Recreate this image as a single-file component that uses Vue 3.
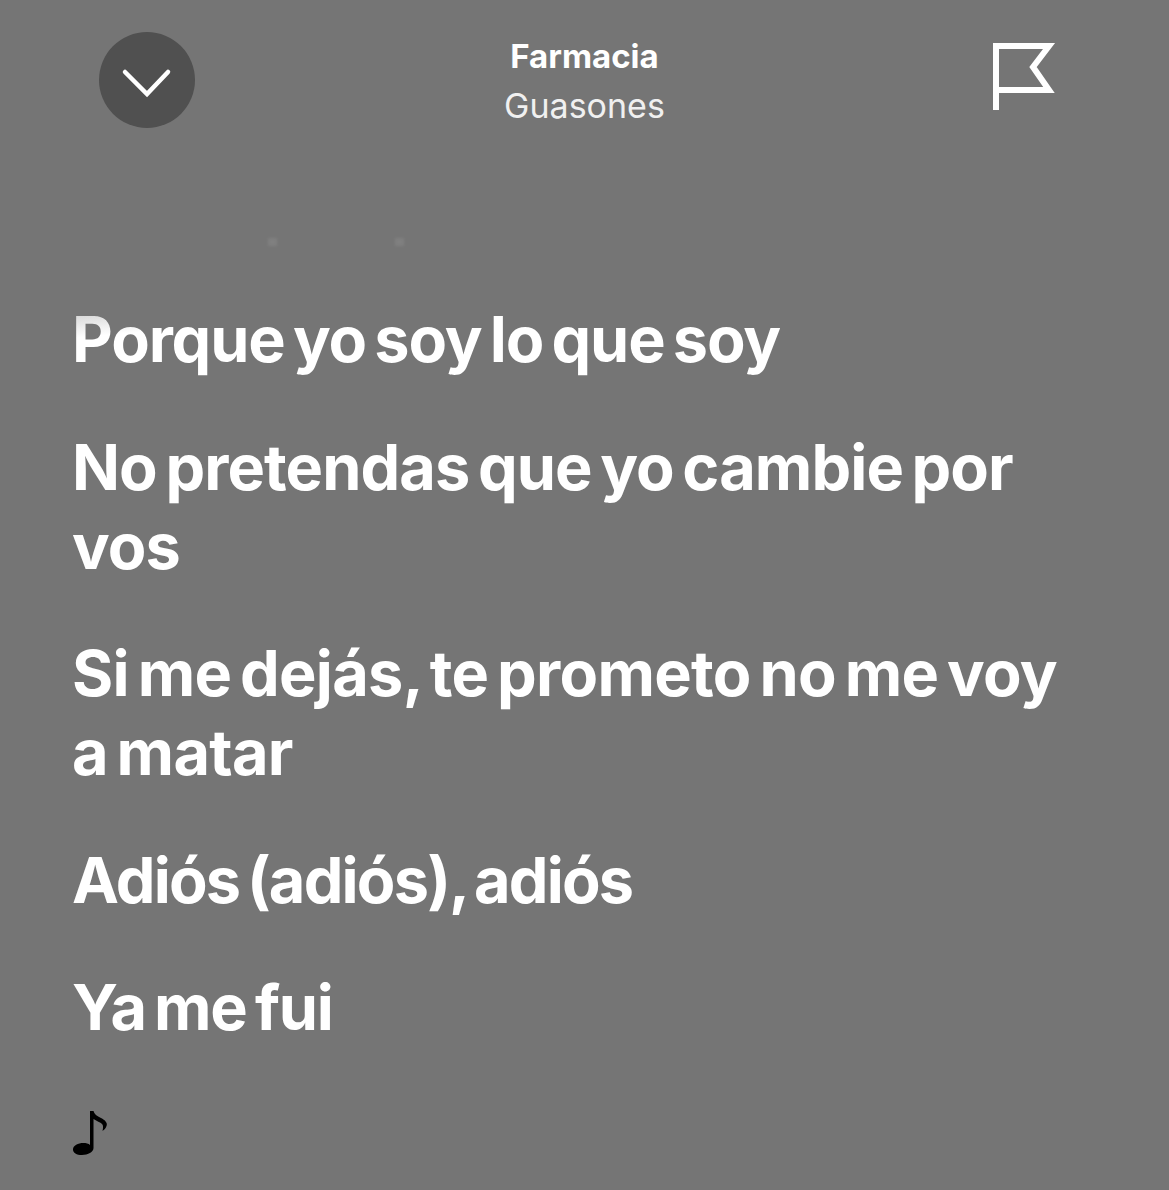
<template>
  <div class="screen">
    <header class="topbar">
      <button class="topbar__close">
        <svg width="96" height="96" viewBox="0 0 96 96">
          <path d="M26 40 L48 62 L69 40" fill="none" stroke="#fff" stroke-width="4.5" stroke-linecap="round" stroke-linejoin="miter" />
        </svg>
      </button>
      <div class="topbar__track">
        <div class="topbar__title">{{ title }}</div>
        <div class="topbar__artist">{{ artist }}</div>
      </div>
      <svg class="topbar__flag" width="64" height="68" viewBox="0 0 64 68">
        <path d="M4 67 V3 H57 L41 24 L57 47 H4" fill="none" stroke="#fff" stroke-width="6" />
      </svg>
    </header>

    <div class="fadedLine">
      <span class="fadedLine__dot"></span>
      <span class="fadedLine__dot"></span>
    </div>

    <main class="lyrics">
      <p
        v-for="(line, i) in lines"
        :key="line.text"
        class="lyrics__line"
        :class="{ 'lyrics__line--first': i === 0 }"
        :style="{ letterSpacing: line.tracking + 'px' }"
      >{{ line.text }}</p>
      <svg class="lyrics__note" width="38" height="48" viewBox="0 0 38 48">
        <path d="M17 1 H20.5 C21 4 24 6 28 8 C32 10 35 13 33.5 16 C33 18 31 20 29.500 21 C30.500 17 30.500 14 27 12.500 C25 11.500 22 10 20.500 9 V38 C20.500 42 15 45 9 45 C3.500 45 0 43 0 39.500 C0 35.500 5 33 10.500 33 C13 33 15.500 33.500 17 35 Z" fill="#000" />
      </svg>
    </main>
  </div>
</template>

<script setup>
const title = 'Farmacia'
const artist = 'Guasones'

const lines = [
  { text: 'Porque yo soy lo que soy', tracking: -1.15 },
  { text: 'No pretendas que yo cambie por vos', tracking: -0.9 },
  { text: 'Si me dejás, te prometo no me voy a matar', tracking: -0.7 },
  { text: 'Adiós (adiós), adiós', tracking: -1.8 },
  { text: 'Ya me fui', tracking: -1.2 }
]
</script>

<style>
html, body {
  margin: 0;
  background: #757575;
}
</style>

<style scoped>
.screen {
  width: 1169px;
  height: 1190px;
  overflow: hidden;
  background: #757575;
  font-family: Inter, "Liberation Sans", sans-serif;
  color: #fff;
  position: relative;
}

.topbar {
  display: grid;
  grid-template-columns: 1fr auto 1fr;
  align-items: start;
  padding: 32px 99px 0;
}

.topbar__close {
  width: 96px;
  height: 96px;
  padding: 0;
  border: 0;
  border-radius: 50%;
  background: #505050;
}

.topbar__close svg {
  display: block;
}

.topbar__track {
  text-align: center;
  line-height: 50px;
  margin-top: -1px;
}

.topbar__title {
  font-size: 33px;
  font-weight: 700;
}

.topbar__artist {
  font-size: 34px;
  font-weight: 400;
  color: #f0f0f0;
}

.topbar__flag {
  justify-self: end;
  margin: 11px 14px 0 0;
}

.fadedLine__dot {
  position: absolute;
  top: 238px;
  left: 268px;
  width: 9px;
  height: 8px;
  background: #808080;
  filter: blur(1.5px);
}

.fadedLine__dot + .fadedLine__dot {
  left: 395px;
}

.lyrics {
  padding: 169px 100px 0 72px;
}

.lyrics__line {
  margin: 0 0 48.5px;
  font-size: 63px;
  line-height: 79px;
  font-weight: 700;
  word-spacing: -5.5px;
}

.lyrics__line--first {
  width: max-content;
  color: transparent;
  background: linear-gradient(175deg, #d0d0d0 10px, #fff 38px);
  -webkit-background-clip: text;
  background-clip: text;
}

.lyrics__note {
  display: block;
  margin: 62.5px 0 0 1px;
}
</style>
